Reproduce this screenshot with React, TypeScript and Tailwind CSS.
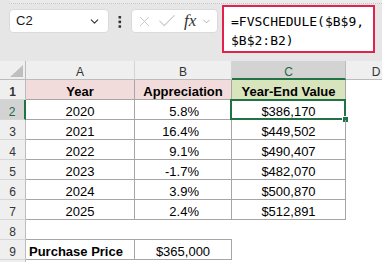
import { ChevronDown, X, Check } from "lucide-react"

const rows = [
  { n: 2, year: "2020", pct: "5.8%", val: "$386,170" },
  { n: 3, year: "2021", pct: "16.4%", val: "$449,502" },
  { n: 4, year: "2022", pct: "9.1%", val: "$490,407" },
  { n: 5, year: "2023", pct: "-1.7%", val: "$482,070" },
  { n: 6, year: "2024", pct: "3.9%", val: "$500,870" },
  { n: 7, year: "2025", pct: "2.4%", val: "$512,891" },
]

function RowHead({ n, active = false }: { n?: number; active?: boolean }) {
  return (
    <div
      className={`w-[26px] shrink-0 h-full text-center text-[12px] leading-[14px] pt-[5px] border-b border-b-[#d6d6d6] ${
        active
          ? "bg-[#d3d3d3] text-[#1e6b41] border-r-2 border-r-[#217346]"
          : "bg-[#efefef] text-[#333] border-r border-r-[#bcbcbc]"
      }`}
    >
      {n}
    </div>
  )
}

export default function App() {
  return (
    <div className="w-[382px] h-[262px] overflow-hidden bg-white font-['Liberation_Sans',Arial,sans-serif] text-black">
      {/* toolbar */}
      <div className="h-[61px] bg-[#e6e6e6] relative">
        <div className="ml-[8px] h-[4px] bg-[#ebebeb] rounded-bl-[4px] border-b border-dotted border-[#c4c4c4]" />
        <div className="flex items-start">
          <div className="ml-[9px] mt-[5px] w-[100px] h-[24px] bg-white rounded-[4px] border border-[#dadada] flex items-center pl-[6px] pr-[7px]">
            <span className="text-[13px] text-[#1a1a1a] flex-1">C2</span>
            <ChevronDown size={13} strokeWidth={2} className="text-[#333]" />
          </div>
          <svg width="4" height="12" viewBox="0 0 4 12" className="ml-[9px] mt-[12px]">
            <rect x="0.5" y="0" width="2.6" height="2.6" rx="0.6" fill="#333" />
            <rect x="0.5" y="4.6" width="2.6" height="2.6" rx="0.6" fill="#333" />
            <rect x="0.5" y="9.2" width="2.6" height="2.6" rx="0.6" fill="#333" />
          </svg>
          <div className="ml-[9px] mt-[5px] w-[87px] h-[24px] bg-white rounded-[4px] border border-[#dadada] flex items-center pl-[4px]">
            <X size={17} strokeWidth={1.2} className="text-[#c2c2c2]" />
            <Check size={22} strokeWidth={1.1} className="text-[#c2c2c2] ml-[3px]" />
            <span className="ml-[6px] text-[17px] italic font-['Liberation_Serif',serif] text-[#333] leading-none -mt-[2px]">
              fx
            </span>
            <ChevronDown size={11} strokeWidth={1.6} className="text-[#9a9a9a] ml-[5px]" />
          </div>
          <div className="ml-[4px] mt-[1px] w-[153px] h-[48px] bg-white border-2 border-[#e3214f] pl-[7px] pt-[5px] font-['DejaVu_Sans_Mono',monospace] text-[13px] leading-[19px] text-black">
            <div>=FVSCHEDULE($B$9,</div>
            <div>$B$2:B2)</div>
          </div>
        </div>
      </div>

      {/* column headers */}
      <div className="flex h-[19px] bg-[#efefef] text-[12px] text-[#333]">
        <div className="w-[26px] shrink-0 border-r border-b border-[#bcbcbc] relative">
          <svg width="13" height="12" viewBox="0 0 13 12" className="absolute left-[10px] top-[4px]">
            <polygon points="13,0 13,12 0,12" fill="#bfbfbf" />
          </svg>
        </div>
        <div className="w-[109px] shrink-0 text-center leading-[14px] pt-[4px] border-r border-r-[#d4d4d4] border-b border-b-[#bcbcbc]">A</div>
        <div className="w-[97px] shrink-0 text-center leading-[14px] pt-[4px] border-r border-r-[#d4d4d4] border-b border-b-[#bcbcbc]">B</div>
        <div className="w-[114px] shrink-0 text-center leading-[14px] pt-[4px] bg-[#d3d3d3] text-[#1e6b41] border-r border-r-[#bcbcbc] border-b-2 border-b-[#217346]">C</div>
        <div className="w-[60px] shrink-0 text-center leading-[14px] pt-[4px] border-b border-b-[#bcbcbc]">D</div>
      </div>

      {/* row 1 */}
      <div className="flex h-[20px] text-[13px] font-bold">
        <RowHead n={1} />
        <div className="w-[109px] shrink-0 bg-[#f2dcdb] text-center leading-[14px] pt-[5px] border-r border-b border-[#a6a6a6]">Year</div>
        <div className="w-[97px] shrink-0 bg-[#f2dcdb] text-center leading-[14px] pt-[5px] border-r border-b border-[#a6a6a6]">Appreciation</div>
        <div className="w-[114px] shrink-0 bg-[#d8e4bc] text-center leading-[14px] pt-[5px] border-r border-b border-[#a6a6a6]">Year-End Value</div>
      </div>

      {rows.map((r, i) => (
        <div key={r.n} className="flex h-[20px] text-[13px]">
          <RowHead n={r.n} active={i === 0} />
          <div className="w-[109px] shrink-0 text-center leading-[14px] pt-[5px] border-r border-b border-[#a6a6a6]">{r.year}</div>
          <div className="w-[97px] shrink-0 text-right pr-[32px] leading-[14px] pt-[5px] border-r border-b border-[#a6a6a6]">{r.pct}</div>
          <div className="w-[114px] shrink-0 text-center leading-[14px] pt-[5px] border-r border-b border-[#a6a6a6] relative">
            {r.val}
            {i === 0 && (
              <>
                <div className="absolute -left-[2px] -top-[1px] -right-[1px] -bottom-[1px] border-2 border-[#217346]" />
                <div className="absolute -right-[4px] -bottom-[4px] w-[7px] h-[7px] bg-[#217346] border border-white" />
              </>
            )}
          </div>
        </div>
      ))}

      {/* row 8 */}
      <div className="flex h-[20px] text-[13px]">
        <RowHead n={8} />
        <div className="w-[109px] shrink-0 border-b border-[#a6a6a6]" />
        <div className="w-[97px] shrink-0 border-b border-[#a6a6a6]" />
      </div>

      {/* row 9 */}
      <div className="flex h-[20px] text-[13px]">
        <RowHead n={9} />
        <div className="w-[109px] shrink-0 font-bold pl-[3px] leading-[14px] pt-[5px] border-r border-b border-[#a6a6a6]">Purchase Price</div>
        <div className="w-[97px] shrink-0 text-center leading-[14px] pt-[5px] border-r border-b border-[#a6a6a6]">$365,000</div>
      </div>

      <div className="flex h-[20px]">
        <RowHead />
      </div>
    </div>
  )
}
